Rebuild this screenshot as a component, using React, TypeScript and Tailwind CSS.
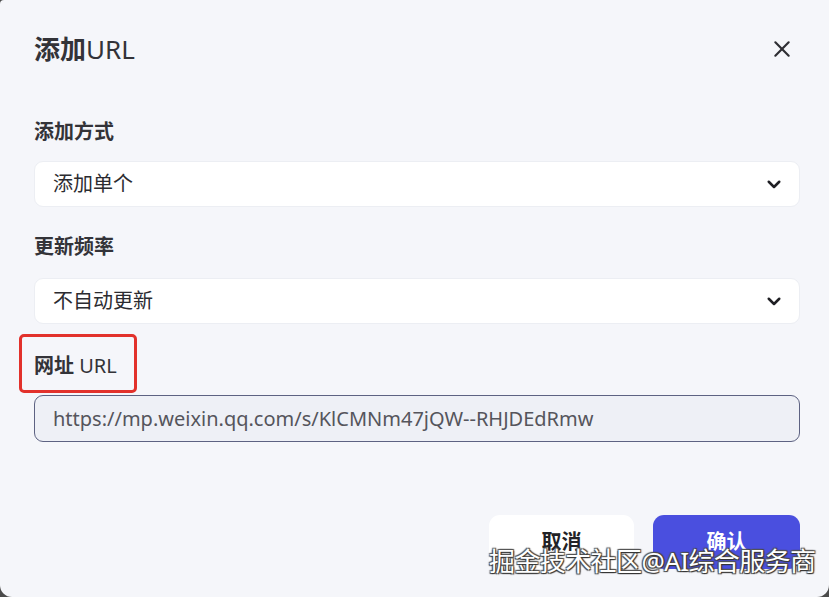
import React from "react";

const font = { fontFamily: '"Noto Sans", "Noto Sans CJK SC", sans-serif' };

const Chevron: React.FC = () => (
  <svg width="18" height="18" viewBox="0 0 24 24" fill="none" stroke="#1f1f24" strokeWidth="3.4" strokeLinecap="round" strokeLinejoin="round">
    <path d="M5 9l7 7 7-7" />
  </svg>
);

const SelectBox: React.FC<{ value: string }> = ({ value }) => (
  <div className="flex h-[46px] items-center justify-between rounded-[9px] border border-[#eceef3] bg-white pl-[18px] pr-[16px]">
    <span className="text-[20px] text-[#2b2b30]">{value}</span>
    <Chevron />
  </div>
);

export default function App() {
  return (
    <div className="h-[597px] w-[829px] overflow-hidden bg-[#4b4b4b]" style={font}>
      <div className="relative flex h-full w-full flex-col rounded-tl-[4px] rounded-b-[12px] bg-[#f5f6fa] pl-[34px] pr-[29px]">
        {/* header */}
        <div className="flex h-[100px] items-center justify-between pb-[2px]">
          <h1 className="text-[26px] font-bold text-[#333338]">
            添加<span className="font-normal">URL</span>
          </h1>
          <svg width="20" height="20" viewBox="0 0 24 24" fill="none" stroke="#2e2e33" strokeWidth="2.6" strokeLinecap="round" className="mr-[8px]">
            <path d="M4 4l16 16M20 4L4 20" />
          </svg>
        </div>

        {/* form */}
        <div className="flex flex-col">
          <label className="mt-[19px] text-[20px] font-bold leading-[26px] text-[#333338]">添加方式</label>
          <div className="mt-[16px]">
            <SelectBox value="添加单个" />
          </div>

          <label className="mt-[27px] text-[20px] font-bold leading-[26px] text-[#333338]">更新频率</label>
          <div className="mt-[18px]">
            <SelectBox value="不自动更新" />
          </div>

          <div className="ml-[-15px] mt-[10px] flex h-[59px] w-[118px] items-center rounded-[5px] border-[3px] border-[#e2312b] pl-[12px] pt-[4px]">
            <span className="whitespace-nowrap text-[20px] leading-[26px] text-[#333338]">
              <span className="font-bold">网址</span> URL
            </span>
          </div>

          <div className="mt-[2px] flex h-[47px] items-center rounded-[9px] border border-[#5d6282] bg-[#eef0f6] pl-[18px]">
            <span className="text-[20px] text-[#55555c]">https://mp.weixin.qq.com/s/KlCMNm47jQW--RHJDEdRmw</span>
          </div>
        </div>

        {/* footer */}
        <div className="mt-[73px] flex items-start justify-end gap-[19px]">
          <button className="h-[54px] w-[145px] rounded-[11px] bg-white text-[20px] font-bold text-[#222226]">取消</button>
          <button className="h-[54px] w-[147px] rounded-[11px] bg-[#4a4fdf] text-[20px] font-bold text-white">确认</button>
        </div>

        {/* watermark */}
        <div
          className="absolute left-[489px] top-[542px] whitespace-nowrap text-[26px] tracking-[-0.6px] text-white"
          style={{ textShadow: "1px 1px 1px #333, -1px -1px 1px #555, 1px -1px 1px #444, -1px 1px 1px #444" }}
        >
          掘金技术社区@AI综合服务商
        </div>
      </div>
    </div>
  );
}
